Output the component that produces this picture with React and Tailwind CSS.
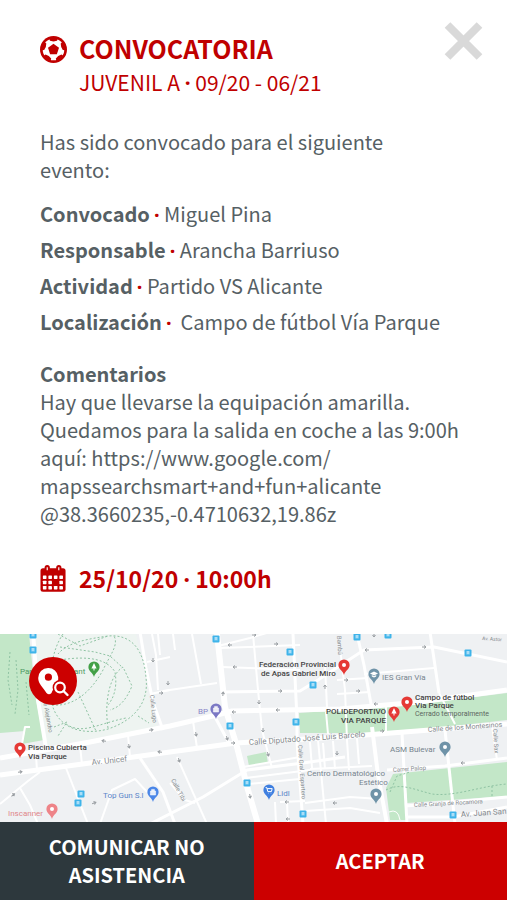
const ROADS = [
  ["M33 632 L38 700 L46 748", 4],
  ["M140 632 L146 668 L153 702 L163 730", 3],
  ["M0 758 L90 742 L170 726 L217 715 L232 711 L340 709 L420 702 L507 690", 5],
  ["M0 775 L90 763 L170 752 L236 743 L340 737 L430 730 L507 724", 5],
  ["M217 634 L225 707 L237 747 L248 790 L258 824", 6],
  ["M218 646 L250 638 L270 632", 2],
  ["M219 648 L300 645", 2],
  ["M222 667 L300 670", 2],
  ["M222 692 L300 691 L318 680 L364 650 L434 647 L507 662", 3],
  ["M293 634 L297 720 L297 742 L303 824", 3],
  ["M253 634 L258 690 L262 730 L272 768", 2],
  ["M192 634 L201 684", 2],
  ["M163 691 L217 683", 2],
  ["M173 634 L175 650", 2],
  ["M150 694 L170 690", 2],
  ["M152 634 L156 655 L158 690", 2],
  ["M147 662 L170 657", 2],
  ["M160 655 L158 634", 2],
  ["M215 717 L230 745", 3],
  ["M193 721 L197 748", 2],
  ["M177 757 L207 824", 2],
  ["M150 824 L203 797 L247 770 L303 763 L345 757", 3],
  ["M243 767 L300 757", 2],
  ["M245 778 L310 770", 2],
  ["M248 784 L300 779", 2],
  ["M36 756 L37 770", 2],
  ["M80 745 L82 765", 2],
  ["M128 735 L130 757", 2],
  ["M66 768 L88 824", 2],
  ["M140 758 L163 792 L175 824", 3],
  ["M100 824 L112 790 L135 779 L147 792", 2],
  ["M0 804 L28 781 L40 772", 2],
  ["M20 788 L30 805 L38 824", 2],
  ["M170 783 L185 800 L195 803", 2],
  ["M318 740 L326 824", 2],
  ["M340 648 L345 690 L347 740 L349 770", 2],
  ["M325 665 L327 708", 2],
  ["M337 680 L368 678", 2],
  ["M337 694 L370 692", 2],
  ["M357 634 L364 665 L371 704", 3],
  ["M372 727 L378 775 L387 824", 4],
  ["M430 632 L439 693", 3],
  ["M439 693 L455 724", 2],
  ["M364 674 L434 668", 2],
  ["M445 730 L455 824", 3],
  ["M402 733 L407 824", 3],
  ["M387 770 L445 766 L507 758", 3],
  ["M405 806 L455 802 L507 797", 3],
  ["M492 726 L497 760", 2],
  ["M310 742 L312 768", 2],
  ["M323 743 L325 769", 2],
  ["M333 741 L335 769", 2],
  ["M357 738 L359 764", 2],
  ["M310 769 L372 766", 2],
  ["M305 803 L350 797 L380 799", 2],
  ["M305 811 L350 808 L380 813", 2],
  ["M407 817 L453 817 L507 807", 3],
  ["M280 802 L305 801", 2],
  ["M276 824 L275 802", 2],
  ["M288 824 L287 802", 2],
];

const PATHS = [
  "M63 634 C52 650 48 675 52 704 C58 728 82 736 108 729 C135 720 149 702 146 678 C144 650 132 634 108 636 C88 639 68 642 58 654",
  "M52 705 C75 707 92 690 103 670 C110 655 119 645 114 636",
  "M108 728 C104 700 110 675 123 667 L132 686 C126 700 120 707 110 710",
  "M78 692 L96 731",
  "M60 647 L95 652 L110 656 L122 667",
  "M54 727 L67 722 L58 736",
  "M138 716 L149 723",
  "M58 634 L80 646 L108 636",
  "M60 660 C90 655 108 660 115 672 C118 690 112 700 108 705",
  "M66 724 C82 735 97 724 126 718",
  "M10 652 L8 680 L12 705",
  "M16 660 L18 690 L15 714",
  "M26 682 L29 715",
];

const STOPS = [
  [33, 635], [33, 650], [216, 639], [290, 652], [313, 685], [230, 726], [296, 722],
  [247, 783], [303, 814], [81, 794], [78, 803], [357, 637], [388, 635], [468, 653], [453, 815],
];

const PINS = [
  [94, 668, "#43a047", "tree"],
  [344, 666, "#e53935", "dot"],
  [374, 675, "#6f93a8", "school"],
  [407, 703, "#e53935", "dot"],
  [394, 713, "#e53935", "tree"],
  [20, 749, "#e53935", "dot"],
  [216, 710, "#7b78c4", "box"],
  [153, 793, "#4a86e8", "box"],
  [52, 810, "#ee8488", "dot"],
  [269, 791, "#3f7fe0", "cart"],
  [445, 748, "#6f93a8", "dot"],
  [376, 795, "#6f93a8", "dot"],
];

const ARROWS = [
  [104, 741, -170], [151, 730, -10], [129, 746, 80], [160, 752, -170], [20, 772, -10], [13, 795, -40],
  [94, 803, -20], [230, 645, 180], [276, 644, 0], [254, 635, 0], [235, 667, 180], [280, 691, 0],
  [259, 702, 90], [223, 694, -85], [234, 712, 180], [278, 710, 180], [263, 730, 90], [227, 738, 70],
  [233, 743, 0], [196, 734, 80], [179, 760, 70], [268, 754, 70], [250, 796, 80], [287, 802, 180],
  [325, 687, -90], [367, 650, 180], [424, 647, 0], [374, 635, 90], [358, 691, 0], [376, 704, 180],
  [382, 731, 0], [463, 763, 180], [346, 680, 0], [337, 753, 90], [288, 819, 180], [335, 803, 180],
  [153, 660, 90], [161, 693, 0], [168, 683, 90],
];

const LABELS = [
  [20, 674, "Parque", "fill-[#4f9a63] text-[8px]"],
  [74, 674, "ant", "fill-[#4f9a63] text-[8px]"],
  [28, 750, "Piscina Cubierta", "fill-[#444] text-[8px] font-medium"],
  [28, 759, "Via Parque", "fill-[#444] text-[8px] font-medium"],
  [8, 816, "Inscanner", "fill-[#e0868a] text-[8px]"],
  [103, 798, "Top Gun S.l", "fill-[#5b86c9] text-[8px]"],
  [198, 714, "BP", "fill-[#8a88c8] text-[8px]"],
  [277, 796, "Lidl", "fill-[#5b86c9] text-[8px]"],
  [259, 667, "Federación Provincial", "fill-[#444] text-[8px] font-medium"],
  [261, 676, "de Apas Gabriel Miro", "fill-[#444] text-[8px] font-medium"],
  [382, 680, "IES Gran Vía", "fill-[#76848e] text-[8px]"],
  [326, 714, "POLIDEPORTIVO", "fill-[#444] text-[8px] font-medium"],
  [341, 723, "VIA PARQUE", "fill-[#444] text-[8px] font-medium"],
  [415, 700, "Campo de fútbol", "fill-[#444] text-[8px] font-medium"],
  [415, 708, "Via Parque", "fill-[#444] text-[8px] font-medium"],
  [415, 716, "Cerrado temporalmente", "fill-[#5c665f] text-[7px]"],
  [390, 752, "ASM Bulevar", "fill-[#76848e] text-[8px]"],
  [307, 776, "Centro Dermatológico", "fill-[#76848e] text-[8px]"],
  [359, 785, "Estético", "fill-[#76848e] text-[8px]"],
];

const STREETS = [
  [92, 765, -6, "Av. Unicef", "text-[8px]"],
  [249, 745, -4, "Calle Diputado José Luis Barcelo", "text-[8px]"],
  [428, 732, -4, "Calle de los Montesinos", "text-[7px]"],
  [393, 772, -4, "Carrer Palop", "text-[6px]"],
  [414, 807, -3, "Calle Granja de Rocamora", "text-[6px]"],
  [461, 817, -4, "Av. Juan San", "text-[8px]"],
  [482, 640, 4, "Av. Astor", "text-[5px]"],
  [150, 695, 84, "Calle Lugo", "text-[6px]"],
  [43, 700, 80, "de Alejandro", "text-[6px]"],
  [171, 780, 62, "Calle Tibi", "text-[6px]"],
  [298, 745, 86, "Calle Gral. Espartero", "text-[6px]"],
  [493, 729, 86, "Calle Sax", "text-[6px]"],
  [337, 636, 86, "Bambú", "text-[6px]"],
];

const DETAILS = [
  ["Convocado", "Miguel Pina"],
  ["Responsable", "Arancha Barriuso"],
  ["Actividad", "Partido VS Alicante"],
  ["Localización", "\u00a0Campo de fútbol Vía Parque"],
];

function Dot() {
  return <span className="font-['Noto_Sans',sans-serif] leading-none font-bold text-[#c00000]">·</span>;
}

function BallIcon() {
  const spokes = [0, 72, 144, 216, 288];
  return (
    <svg viewBox="0 0 28 28" className="size-[27px] shrink-0" aria-hidden="true">
      <circle cx="14" cy="14" r="14" fill="#c00000" />
      <circle cx="14" cy="14" r="11.2" fill="#fff" />
      <path d="M14 8 L19.7 12.2 L17.5 18.9 H10.5 L8.3 12.2 Z" fill="#c00000" />
      {spokes.map((a) => (
        <path key={a} transform={`rotate(${a} 14 14)`} d="M9.2 2 L18.8 2 L17.6 5 L14 5.6 L10.4 5 Z" fill="#c00000" />
      ))}
    </svg>
  );
}

function CalendarIcon() {
  const cells = [];
  for (let r = 0; r < 3; r++) for (let c = 0; c < 4; c++) if (!(r === 1 && c === 2)) cells.push([3.4 + c * 5.7, 10.8 + r * 5.5]);
  return (
    <svg viewBox="0 0 28 28" className="size-[27px] shrink-0" aria-hidden="true">
      <rect x="0.5" y="3.4" width="26" height="24.4" rx="2.6" fill="#c00000" />
      <rect x="4.8" y="0" width="5.4" height="7" rx="2.7" fill="#c00000" />
      <rect x="16.8" y="0" width="5.4" height="7" rx="2.7" fill="#c00000" />
      <path d="M7.5 2.4 V5.4 M19.5 2.4 V5.4" stroke="#fff" strokeWidth="1.2" />
      {cells.map(([x, y]) => (
        <rect key={`${x}-${y}`} x={x - 0.4} y={y} width="3.7" height="3.7" rx="0.5" fill="#fff" />
      ))}
    </svg>
  );
}

function Pin({ x, y, color, kind }) {
  return (
    <g transform={`translate(${x} ${y})`}>
      <path d="M0 9 C-1 4.5 -5.6 3.6 -5.6 -1 A5.6 5.6 0 0 1 5.6 -1 C5.6 3.6 1 4.5 0 9 Z" fill={color} />
      {kind === "dot" && <circle cy="-1" r="2" fill="#fff" />}
      {kind === "tree" && <path d="M0 -5 L2.6 0.6 H0.5 V2.4 H-0.5 V0.6 H-2.6 Z" fill="#fff" />}
      {kind === "school" && <path d="M-4 -1.6 L0 -3.6 L4 -1.6 L0 0.4 Z M-2.2 0 L0 1.2 L2.2 0 V1.6 L0 2.6 L-2.2 1.6 Z" fill="#fff" />}
      {kind === "box" && <path d="M-2.6 -2 H2.6 V2 H-2.6 Z M-1.4 -2 V-3.6 H1.4 V-2" fill="#fff" stroke="#fff" strokeWidth="0.5" fillOpacity="0.85" />}
      {kind === "cart" && <path d="M-3.4 -3.4 H-2.2 L-1.2 0.6 H2.4 L3.2 -2.4 H-1.8 M-1 2.2 H-0.6 M1.8 2.2 H2.2" fill="none" stroke="#fff" strokeWidth="1" />}
    </g>
  );
}

function CityMap() {
  return (
    <svg viewBox="0 634 507 188" preserveAspectRatio="xMidYMid slice" className="block h-47 w-full [font-family:Roboto,sans-serif]" role="img" aria-label="Mapa">
      <rect y="634" width="507" height="188" fill="#eff1f3" />
      <path d="M34 634 H136 L144 668 L150 704 L158 728 L46 746 Z" fill="#eef4f1" />
      <g fill="#c3e7c8">
        <path d="M0 634 H29 L36 700 L44 740 L22 744 L25 731 L0 733 Z" />
        <path d="M299 713 L404 706 L507 693 V720 L445 727 L362 733 L300 733 Z" />
        <path d="M247 756 L266 752 L268 763 L249 766 Z" />
        <path d="M393 774 L507 762 V796 L407 803 V820 H390 L386 788 Z" />
      </g>
      <g fill="none" stroke="#fff" strokeLinejoin="round">
        {ROADS.map(([d, w]) => (
          <path key={d} d={d} strokeWidth={w} />
        ))}
        <path d="M22 744 L25 727 L30 727" strokeWidth="2" />
        <path d="M326 712 L328 734 M386 706 V732" strokeWidth="2" />
        <path d="M389 812 Q398 808 400 820" strokeWidth="1" />
      </g>
      <g fill="none" stroke="#8fc3a3" strokeWidth="1" strokeDasharray="2 2">
        {PATHS.map((d) => (
          <path key={d} d={d} />
        ))}
        <path d="M386 790 C400 782 415 790 432 794 C455 797 480 786 507 784 M390 792 L397 776 L410 772" />
        <path d="M492 786 V798" />
      </g>
      <g fill="none" stroke="#9a9fa3" strokeWidth="1">
        {ARROWS.map(([x, y, a]) => (
          <path key={`${x}-${y}`} transform={`translate(${x} ${y}) rotate(${a})`} d="M-2 0 H2 M0 -1.5 L2 0 L0 1.5" />
        ))}
      </g>
      {STREETS.map(([x, y, a, text, size]) => (
        <text key={text} transform={`translate(${x} ${y}) rotate(${a})`} className={`fill-[#858a8e] ${size}`}>
          {text}
        </text>
      ))}
      {STOPS.map(([x, y]) => (
        <g key={`${x}-${y}`} transform={`translate(${x} ${y})`}>
          <rect x="-3.5" y="-3.5" width="7" height="7" rx="1" fill="#3fb4ea" />
          <path d="M-1.8 -2 H1.8 V1.6 H-1.8 Z M-1.8 0 H1.8" fill="#d9f1fc" stroke="#3fb4ea" strokeWidth="0.6" />
        </g>
      ))}
      {PINS.map(([x, y, color, kind]) => (
        <Pin key={`${x}-${y}`} x={x} y={y} color={color} kind={kind} />
      ))}
      {LABELS.map(([x, y, text, cls]) => (
        <text key={`${text}-${y}`} x={x} y={y} className={cls}>
          {text}
        </text>
      ))}
    </svg>
  );
}

export default function App() {
  return (
    <div className="flex min-h-screen flex-col bg-white font-['Noto_Sans_CJK_SC','Noto_Sans',sans-serif] text-[20px] leading-7 text-[#566064]">
      <main className="flex grow flex-col pr-6 pl-10">
        <header className="flex items-start justify-between pt-5">
          <div className="flex items-start gap-3 pt-3">
            <div className="pt-1">
              <BallIcon />
            </div>
            <div className="text-[#c00000]">
              <h1 className="text-[25px] leading-8 font-bold">CONVOCATORIA</h1>
              <p className="text-[21px] leading-9">
                JUVENIL A <Dot /> 09/20 - 06/21
              </p>
            </div>
          </div>
          <button type="button" aria-label="Cerrar" className="text-[#d9d9d9]">
            <svg viewBox="0 0 40 40" className="size-10" aria-hidden="true">
              <path d="M4.5 5 L36.5 37 M36.5 5 L4.5 37" stroke="currentColor" strokeWidth="8" />
            </svg>
          </button>
        </header>

        <p className="max-w-96 pt-7">Has sido convocado para el siguiente evento:</p>

        <dl className="pt-3">
          {DETAILS.map(([label, value]) => (
            <div key={label} className="flex gap-1 leading-9">
              <dt className="font-bold">{label}</dt>
              <dd>
                <Dot /> {value}
              </dd>
            </div>
          ))}
        </dl>

        <section className="pt-5">
          <h2 className="font-bold">Comentarios</h2>
          <p>
            Hay que llevarse la equipación amarilla.
            <br />
            Quedamos para la salida en coche a las 9:00h
            <br />
            aquí: https://www.google.com/
            <br />
            mapssearchsmart+and+fun+alicante
            <br />
            @38.3660235,-0.4710632,19.86z
          </p>
        </section>

        <div className="flex items-center gap-3 pt-9 pb-9 text-[23px] font-bold text-[#c00000]">
          <CalendarIcon />
          <p>
            25/10/20 <Dot /> 10:00h
          </p>
        </div>
      </main>

      <div className="relative">
        <CityMap />
        <button type="button" aria-label="Ver en el mapa" className="absolute top-[23px] left-[29px] size-12 rounded-full bg-[#cc0000]">
          <svg viewBox="0 0 48 48" className="size-12" aria-hidden="true">
            <path fillRule="evenodd" d="M19 11 A9.8 9.8 0 0 0 9.2 21 C9.2 27 14 30 17.5 36 Q20 38.5 22.5 36 C24 31 30 27 29.2 20 A9.8 9.8 0 0 0 19 11 Z M19.4 16.6 A3.6 3.6 0 1 1 19.4 23.8 A3.6 3.6 0 1 1 19.4 16.6 Z" fill="#fff" />
            <circle cx="31" cy="30.5" r="7.4" fill="#c00" />
            <circle cx="31" cy="30.5" r="4.8" fill="#c00" stroke="#fff" strokeWidth="2.2" />
            <path d="M34.5 34 L38.5 38" stroke="#fff" strokeWidth="2.4" strokeLinecap="round" />
          </svg>
        </button>
      </div>

      <footer className="grid grid-cols-2 text-[20px] font-bold text-white">
        <button type="button" className="bg-[#2d383d] px-8 py-[11px] leading-7">
          COMUNICAR NO ASISTENCIA
        </button>
        <button type="button" className="bg-[#cc0000] px-8 py-[11px] leading-7">
          ACEPTAR
        </button>
      </footer>
    </div>
  );
}
